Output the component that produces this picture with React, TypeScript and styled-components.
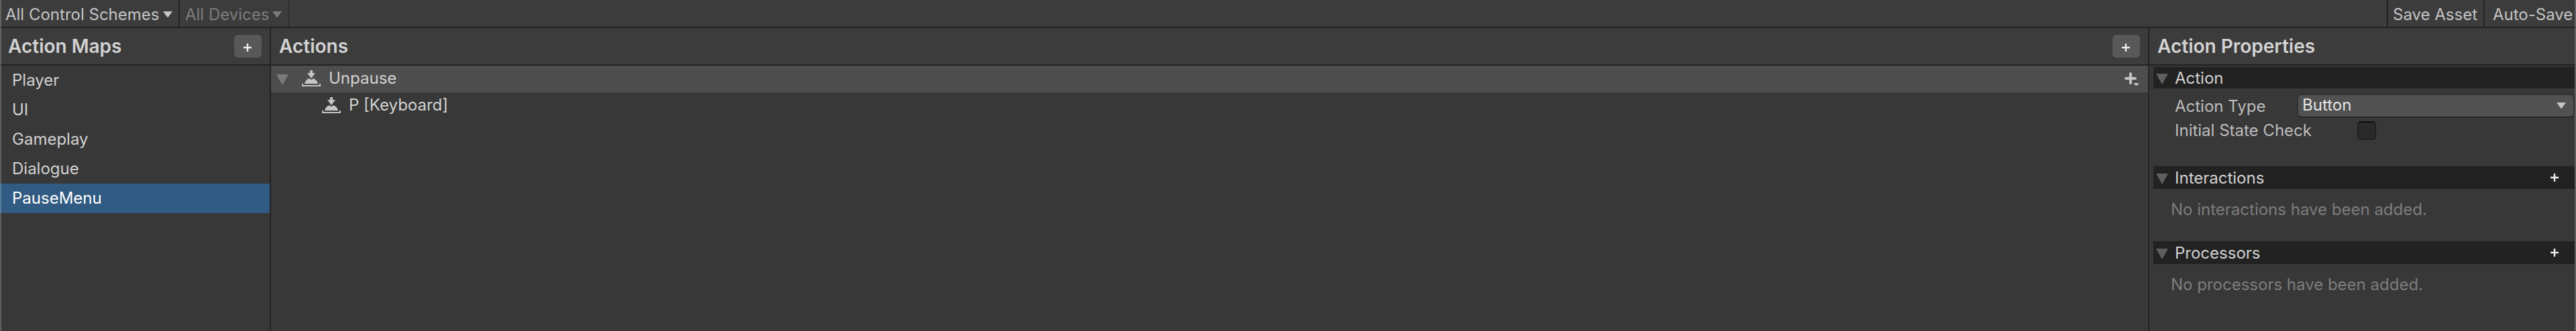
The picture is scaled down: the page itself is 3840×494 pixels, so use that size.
import React from 'react';
import styled, { createGlobalStyle, css } from 'styled-components';

const line = '#232323';

const GlobalStyle = createGlobalStyle`
  * { box-sizing: border-box; }
  body { margin: 0; background: #383838; }
`;

const Window = styled.div`
  position: relative;
  display: flex;
  flex-direction: column;
  width: 3840px;
  height: 494px;
  overflow: hidden;
  background: #383838;
  color: #d2d2d2;
  font: 400 24px/29px Inter, sans-serif;
  white-space: nowrap;

  svg {
    flex: none;
  }
`;

const WindowEdge = styled.div`
  position: absolute;
  inset: 0;
  border: solid rgba(255, 255, 255, 0.2);
  border-width: 0 2px;
  pointer-events: none;
`;

const Toolbar = styled.div`
  display: flex;
  height: 42px;
  background: #3c3c3c;
  border-bottom: 2px solid ${line};
  color: #c4c4c4;
`;

const ToolbarMenu = styled.div<{ $width: number; $disabled?: boolean }>`
  display: flex;
  align-items: center;
  justify-content: space-between;
  width: ${p => p.$width}px;
  padding: 3px 9px 0 8px;
  border-right: 2px solid ${p => (p.$disabled ? '#303030' : line)};
  color: ${p => (p.$disabled ? '#7c7c7c' : '#c4c4c4')};
`;

const ToolbarSpacer = styled.div`
  flex: 1;
`;

const ToolbarButton = styled.div<{ $width: number; $pad: number }>`
  width: ${p => p.$width}px;
  padding: 7px 0 0 ${p => p.$pad}px;
  border-left: 2px solid ${line};
`;

const Body = styled.div`
  display: flex;
  flex: 1;
  min-height: 0;
`;

const Column = styled.section<{ $width?: number }>`
  display: flex;
  flex-direction: column;
  ${p => (p.$width ? css`width: ${p.$width}px;` : css`flex: 1;`)}

  & + & {
    border-left: 2px solid ${line};
  }
`;

const ColumnHeader = styled.header`
  display: flex;
  align-items: center;
  justify-content: space-between;
  height: 56px;
  padding: 0 12px;
  background: #3c3c3c;
  border-bottom: 2px solid ${line};
`;

const ColumnTitle = styled.h2`
  margin: 0;
  font-size: 28px;
  line-height: 34px;
  font-weight: 600;
`;

const AddButton = styled.div`
  display: flex;
  align-items: center;
  justify-content: center;
  width: 41px;
  height: 34px;
  padding: 4px 1px 0 0;
  border-radius: 6px;
  background: #585858;
`;

const MapItem = styled.div<{ $selected?: boolean }>`
  height: 44px;
  padding: 7px 0 0 18px;
  ${p => p.$selected && css`
    background: #315b82;
    color: #fff;
  `}
`;

const TreeRow = styled.div<{ $level: number; $hover?: boolean }>`
  display: flex;
  align-items: center;
  height: 40px;
  padding: 0 13px 0 ${p => (p.$level ? 76 : 8)}px;
  background: ${p => (p.$hover ? '#4d4d4d' : 'none')};
`;

const TreeIcon = styled.span<{ $gap: number }>`
  display: flex;
  margin: 0 12px 2px ${p => p.$gap}px;
`;

const TreeLabel = styled.span`
  flex: 1;
  padding-bottom: 3px;
`;

const Sections = styled.div`
  padding: 2px 2px 0 6px;
`;

const SectionHeader = styled.div<{ $height: number }>`
  display: flex;
  align-items: center;
  height: ${p => p.$height}px;
  padding: 0 24px 0 4px;
  background: #222;
`;

const SectionTitle = styled.span`
  flex: 1;
  padding: 1px 0 0 10px;
`;

const SectionBody = styled.div<{ $height: number }>`
  height: ${p => p.$height}px;
  padding-top: 8px;
`;

const Field = styled.div`
  display: flex;
  align-items: center;
  height: 36px;
  color: #bdbdbd;
`;

const FieldLabel = styled.label<{ $width: number }>`
  width: ${p => p.$width}px;
  padding: 1px 0 0 32px;
`;

const Select = styled.div`
  display: flex;
  flex: 1;
  align-items: center;
  justify-content: space-between;
  height: 36px;
  padding: 0 11px 3px 6px;
  border: 2px solid #303030;
  border-bottom-color: #242424;
  border-radius: 7px;
  background: #515151;
  color: #e4e4e4;
`;

const Checkbox = styled.div`
  width: 28px;
  height: 28px;
  margin-top: 2px;
  border: 2px solid #212121;
  border-top-color: #0d0d0d;
  border-radius: 5px;
  background: #2a2a2a;
`;

const EmptyNote = styled.p`
  margin: 0;
  padding: 8px 0 0 26px;
  color: #7d7d7d;
`;

const CaretIcon = styled.svg<{ $drop: number }>`
  margin-top: ${p => p.$drop}px;
`;

const FoldoutIcon = styled.svg<{ $drop: number }>`
  margin-top: ${p => p.$drop}px;
`;

const Caret = ({ color = '#c4c4c4', drop = 1 }: { color?: string; drop?: number }) => (
  <CaretIcon $drop={drop} width="14" height="10" viewBox="0 0 14 10">
    <path d="M0 0H14L7.8 8.6Q7 9.4 6.2 8.6Z" fill={color} />
  </CaretIcon>
);

const Foldout = ({ color, drop }: { color: string; drop: number }) => (
  <FoldoutIcon $drop={drop} width="18" height="16" viewBox="0 0 18 16">
    <path d="M0 0H18L9 16Z" fill={color} />
  </FoldoutIcon>
);

const Plus = () => (
  <svg width="12" height="12" viewBox="0 0 12 12">
    <path d="M0 6H12M6 0V12" stroke="#eee" strokeWidth="2.4" />
  </svg>
);

const PressIcon = () => (
  <svg width="28" height="24" viewBox="0 0 28 24" fill="#c4c4c4">
    <path d="M12 0H16V4H20L14 12L8 4H12Z" />
    <path d="M4 20C5 16 7.500 13 11 12.300L14 14L17 12.300C20.500 13 23 16 24 20Z" />
    <path d="M0 20H2V22H26V20H28V24H0Z" />
  </svg>
);

const AddBindingIcon = () => (
  <svg width="22" height="20" viewBox="0 0 22 20">
    <path d="M2 9H16M9 2V16" stroke="#c4c4c4" strokeWidth="4" strokeLinecap="round" />
    <path d="M14 16H21Q20.500 19.500 17.500 19.500T14 16Z" fill="#c4c4c4" />
  </svg>
);

const maps = ['Player', 'UI', 'Gameplay', 'Dialogue', 'PauseMenu'];

const EmptySection = ({ title, note }: { title: string; note: string }) => (
  <>
    <SectionHeader $height={34}>
      <Foldout color="#5f5f5f" drop={4} />
      <SectionTitle>{title}</SectionTitle>
      <Plus />
    </SectionHeader>
    <SectionBody $height={78}>
      <EmptyNote>{note}</EmptyNote>
    </SectionBody>
  </>
);

export default function App() {
  return (
    <>
      <GlobalStyle />
      <Window>
        <Toolbar>
          <ToolbarMenu $width={268}>All Control Schemes<Caret /></ToolbarMenu>
          <ToolbarMenu $width={163} $disabled>All Devices<Caret color="#7c7c7c" /></ToolbarMenu>
          <ToolbarSpacer />
          <ToolbarButton $width={144} $pad={7}>Save Asset</ToolbarButton>
          <ToolbarButton $width={138} $pad={12}>Auto-Save</ToolbarButton>
        </Toolbar>
        <Body>
          <Column $width={402}>
            <ColumnHeader>
              <ColumnTitle>Action Maps</ColumnTitle>
              <AddButton><Plus /></AddButton>
            </ColumnHeader>
            {maps.map(name => (
              <MapItem key={name} $selected={name === 'PauseMenu'}>{name}</MapItem>
            ))}
          </Column>
          <Column>
            <ColumnHeader>
              <ColumnTitle>Actions</ColumnTitle>
              <AddButton><Plus /></AddButton>
            </ColumnHeader>
            <TreeRow $level={0} $hover>
              <Foldout color="#7b7b7b" drop={2} />
              <TreeIcon $gap={20}><PressIcon /></TreeIcon>
              <TreeLabel>Unpause</TreeLabel>
              <AddBindingIcon />
            </TreeRow>
            <TreeRow $level={1}>
              <TreeIcon $gap={0}><PressIcon /></TreeIcon>
              <TreeLabel>P [Keyboard]</TreeLabel>
            </TreeRow>
          </Column>
          <Column $width={638}>
            <ColumnHeader>
              <ColumnTitle>Action Properties</ColumnTitle>
            </ColumnHeader>
            <Sections>
              <SectionHeader $height={32}>
                <Foldout color="#5f5f5f" drop={4} />
                <SectionTitle>Action</SectionTitle>
              </SectionHeader>
              <SectionBody $height={116}>
                <Field>
                  <FieldLabel $width={214}>Action Type</FieldLabel>
                  <Select>Button<Caret drop={3} /></Select>
                </Field>
                <Field>
                  <FieldLabel $width={304}>Initial State Check</FieldLabel>
                  <Checkbox />
                </Field>
              </SectionBody>
              <EmptySection title="Interactions" note="No interactions have been added." />
              <EmptySection title="Processors" note="No processors have been added." />
            </Sections>
          </Column>
        </Body>
        <WindowEdge />
      </Window>
    </>
  );
}
